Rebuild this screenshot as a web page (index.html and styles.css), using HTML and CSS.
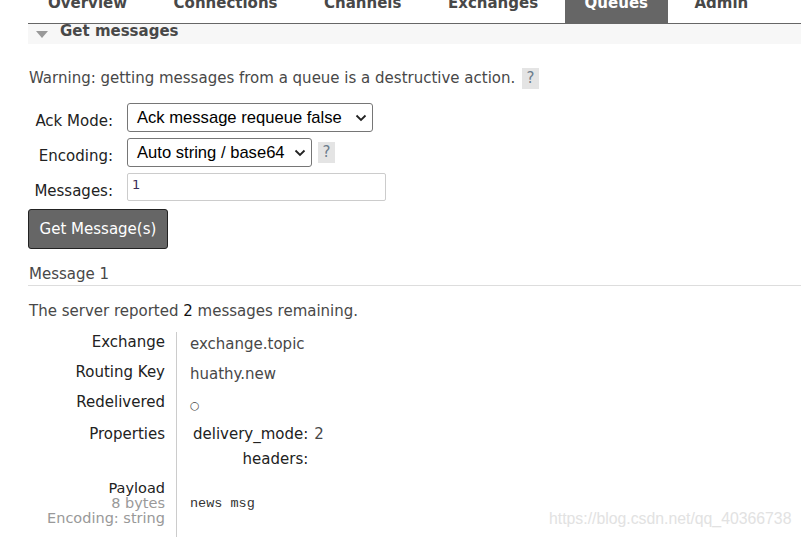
FILE: index.html
```html
<!DOCTYPE html>
<html>
<head>
<meta charset="utf-8">
<link rel="stylesheet" href="styles.css">
</head>
<body>
<div class="page">
  <nav class="tabs">
    <a class="tab">Overview</a>
    <a class="tab">Connections</a>
    <a class="tab">Channels</a>
    <a class="tab">Exchanges</a>
    <a class="tab active">Queues</a>
    <a class="tab">Admin</a>
  </nav>
  <div class="section-head">
    <span class="tri"></span>
    <span class="section-title">Get messages</span>
  </div>
  <p class="warning">Warning: getting messages from a queue is a destructive action. <span class="help">?</span></p>
  <div class="form">
    <div class="frow">
      <span class="flabel">Ack Mode:</span>
      <div class="select ack"><span>Ack message requeue false</span><svg class="chev" width="12" height="8" viewBox="0 0 12 8"><path d="M1.5 1.5 L6 6 L10.5 1.5" fill="none" stroke="#222" stroke-width="1.8"/></svg></div>
    </div>
    <div class="frow">
      <span class="flabel">Encoding:</span>
      <div class="select enc"><span>Auto string / base64</span><svg class="chev" width="12" height="8" viewBox="0 0 12 8"><path d="M1.5 1.5 L6 6 L10.5 1.5" fill="none" stroke="#222" stroke-width="1.8"/></svg></div>
      <span class="help">?</span>
    </div>
    <div class="frow">
      <span class="flabel">Messages:</span>
      <div class="input">1</div>
    </div>
  </div>
  <button class="btn">Get Message(s)</button>
  <div class="msg-head">Message 1</div>
  <p class="remaining">The server reported <span class="num">2</span> messages remaining.</p>
  <div class="details">
    <div class="dl">Exchange</div><div class="dv">exchange.topic</div>
    <div class="dl">Routing Key</div><div class="dv">huathy.new</div>
    <div class="dl">Redelivered</div><div class="dv circ">○</div>
    <div class="dl">Properties</div>
    <div class="dv props">
      <div class="pk">delivery_mode:</div><div class="pv">2</div>
      <div class="pk">headers:</div><div class="pv"></div>
    </div>
    <div class="dl payload">Payload<span class="sub">8 bytes</span><span class="sub">Encoding: string</span></div>
    <div class="dv mono">news msg</div>
  </div>
  <div class="watermark">https://blog.csdn.net/qq_40366738</div>
</div>
</body>
</html>
```
FILE: styles.css
```css
html, body {
  margin: 0;
  padding: 0;
  background: #fff;
}
body {
  font-family: "DejaVu Sans", Verdana, sans-serif;
  font-size: 15px;
  color: #484848;
  overflow: hidden;
  height: 537px;
}
.page {
  position: relative;
  display: flow-root;
  height: 537px;
  padding-left: 28px;
}
.tabs {
  display: flex;
  gap: 6.5px;
  margin-top: -6px;
  height: 29px;
  border-bottom: 1px solid #666;
}
.tab {
  display: block;
  padding: 0 20px;
  font-weight: bold;
  font-size: 15px;
  line-height: 18px;
  color: #484848;
}
.tab.active {
  background: #666;
  color: #fff;
}
.section-head {
  display: flex;
  align-items: center;
  height: 20px;
  background: #f7f7f7;
}
.tri {
  width: 0;
  height: 0;
  margin-left: 8px;
  margin-right: 12px;
  border-left: 6px solid transparent;
  border-right: 6px solid transparent;
  border-top: 7px solid #999;
}
.section-title {
  font-weight: bold;
  font-size: 15px;
  color: #484848;
  line-height: 16px;
  margin-top: -6px;
}
.warning {
  margin: 24px 0 0 1px;
  line-height: 20px;
}
.help {
  display: inline-block;
  width: 17px;
  height: 21px;
  line-height: 21px;
  text-align: center;
  background: #e4e4e4;
  color: #6b7b8c;
  font-size: 15px;
  vertical-align: middle;
  margin-left: 2px;
}
.form {
  margin-top: 14px;
  display: flex;
  flex-direction: column;
  gap: 6px;
}
.frow {
  display: flex;
  align-items: center;
}
.flabel {
  width: 85px;
  text-align: right;
  margin-right: 14px;
  color: #222;
  padding-top: 7px;
}
.select {
  display: flex;
  align-items: center;
  justify-content: space-between;
  box-sizing: border-box;
  height: 29px;
  border: 1px solid #767676;
  border-radius: 3px;
  padding: 0 5px 0 9px;
  font-family: "Liberation Sans", Arial, sans-serif;
  font-size: 16.6px;
  color: #000;
}
.select.ack { width: 246px; }
.select.enc { width: 185px; }
.chev { margin-left: 8px; }
.frow .help { margin-left: 6px; }
.input {
  box-sizing: border-box;
  width: 259px;
  height: 28px;
  border: 1px solid #ccc;
  border-radius: 2px;
  padding: 3px 4px;
  font-size: 13px;
  color: #3b2e5a;
}
.btn {
  display: block;
  margin-top: 8px;
  width: 140px;
  height: 40px;
  background: #666;
  border: 1px solid #222;
  border-radius: 3px;
  color: #fff;
  font-family: "DejaVu Sans", Verdana, sans-serif;
  font-size: 15px;
  padding: 0;
}
.msg-head {
  margin-top: 16px;
  padding-left: 1px;
  height: 20px;
  line-height: 18px;
  border-bottom: 1px solid #ddd;
}
.remaining {
  margin: 15px 0 0 1px;
  line-height: 20px;
}
.remaining .num {
  color: #111;
}
.details {
  display: grid;
  grid-template-columns: 149px 1fr;
  margin-top: 11px;
  height: 225px;
  grid-auto-rows: min-content;
}
.dl {
  text-align: right;
  color: #222;
  padding-right: 11px;
  border-right: 1px solid #ccc;
  line-height: 20px;
  padding-bottom: 10px;
}
.dv {
  padding-left: 13px;
  line-height: 20px;
  padding-top: 2px;
  padding-bottom: 8px;
}
.circ { font-size: 11px; padding-top: 4px; }
.props {
  display: grid;
  grid-template-columns: auto auto;
  justify-content: start;
  column-gap: 6px;
  row-gap: 5px;
  color: #222;
  padding-left: 16px;
  padding-top: 0;
  padding-bottom: 12px;
}
.pk { text-align: right; }
.pv { color: #484848; }
.payload {
  display: flex;
  flex-direction: column;
  font-size: 14.5px;
  line-height: 15px;
  padding-top: 0;
  height: 100%;
}
.sub { color: #999; }
.mono {
  font-family: "Liberation Mono", "Courier New", monospace;
  font-size: 13.5px;
  padding-top: 13px;
  color: #333;
}
.watermark {
  position: absolute;
  left: 549px;
  top: 510px;
  font-family: "Liberation Sans", Arial, sans-serif;
  font-size: 15.8px;
  color: #e2e2e2;
}
```
